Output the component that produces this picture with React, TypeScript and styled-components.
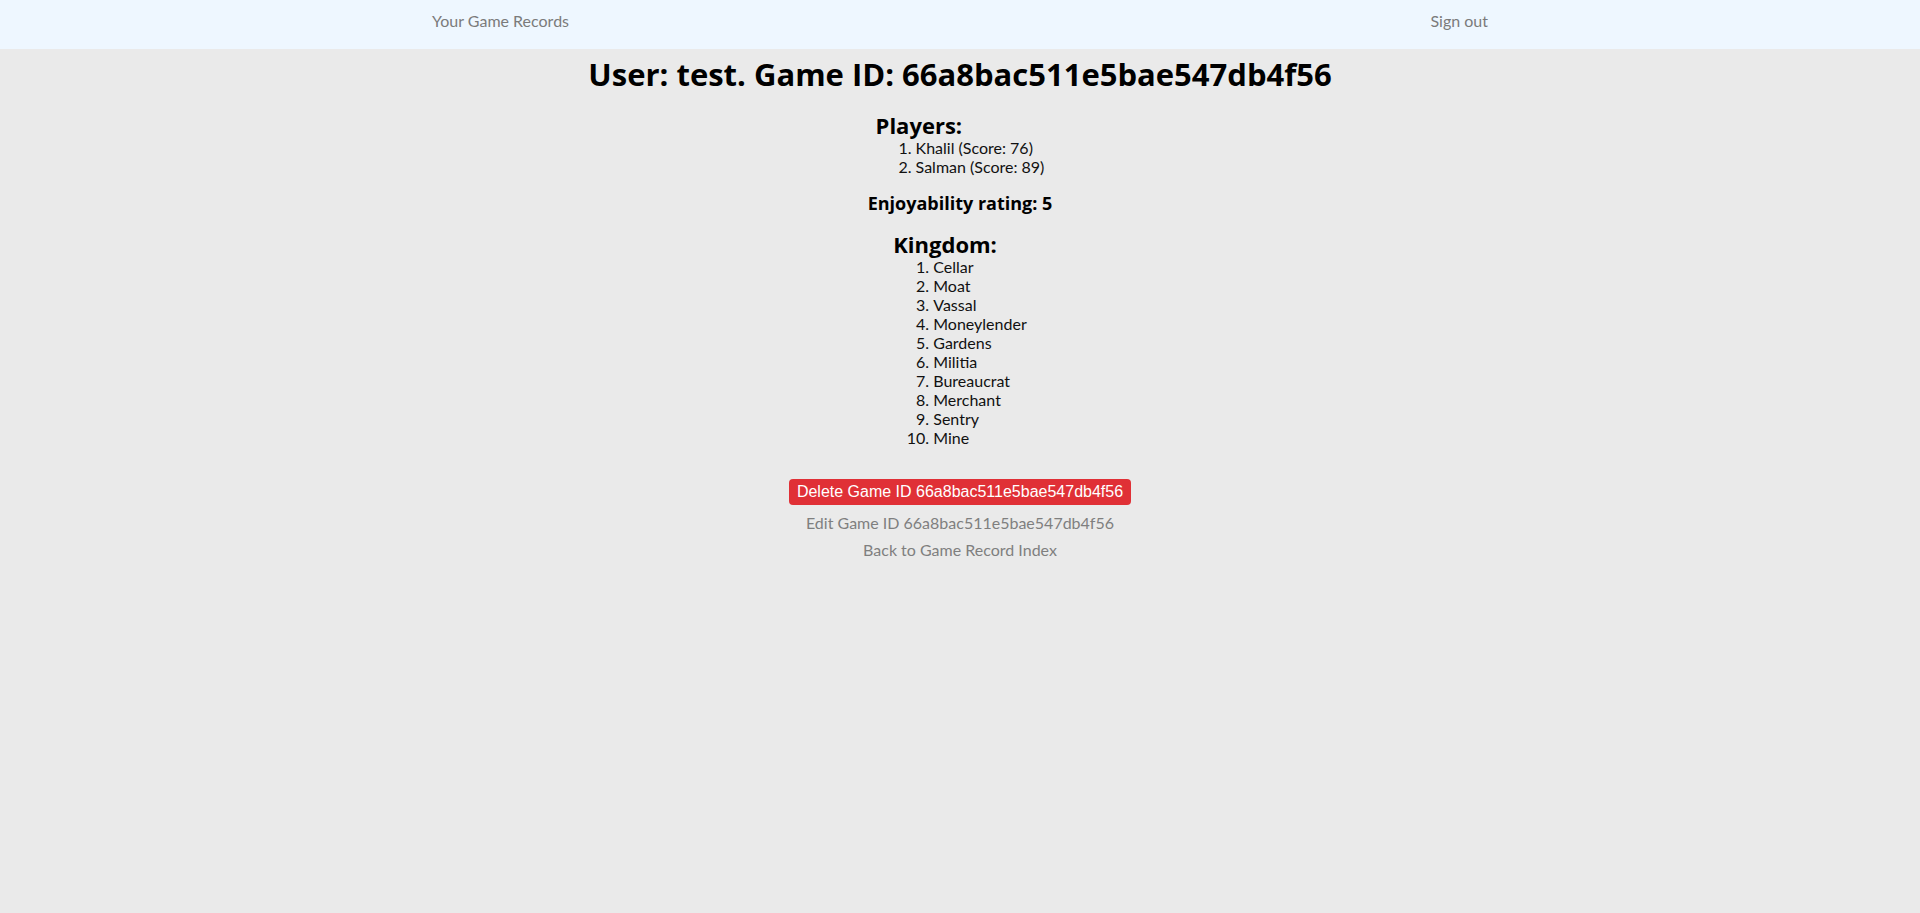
import React from "react";
import styled, { createGlobalStyle } from "styled-components";

const GlobalStyle = createGlobalStyle`
  html, body {
    margin: 0;
    padding: 0;
  }
  body {
    background: #eaeaea;
    font-family: Lato, "Open Sans", sans-serif;
    font-size: 16px;
    color: #111;
  }
`;

const NavBar = styled.nav`
  height: 49px;
  background: #eef7ff;
  box-sizing: border-box;
`;

const NavInner = styled.div`
  width: 1056px;
  margin: 0 auto;
  padding-top: 11px;
  display: flex;
  justify-content: space-between;
`;

const NavLink = styled.a`
  color: #7b7b7b;
  font-size: 16px;
  line-height: 19px;
  text-decoration: none;
`;

const Main = styled.main`
  text-align: center;
  padding-top: 7px;
`;

const Title = styled.h1`
  margin: 0;
  font-family: "Open Sans", sans-serif;
  font-weight: 700;
  font-size: 31px;
  line-height: 36px;
  color: #000;
`;

const Block = styled.section<{ $top: number }>`
  display: inline-block;
  text-align: left;
  margin-top: ${(p) => p.$top}px;
`;

const SectionHeading = styled.h2`
  margin: 0;
  font-family: "Open Sans", sans-serif;
  font-weight: 700;
  font-size: 22px;
  line-height: 26px;
  color: #000;
`;

const List = styled.ol`
  margin: 0;
  padding-left: 40px;
  line-height: 19px;
  font-size: 16px;
`;

const Rating = styled.h3`
  margin: 16px 0 0;
  font-family: "Open Sans", sans-serif;
  font-weight: 700;
  font-size: 18px;
  line-height: 22px;
  color: #000;
`;

const Actions = styled.div`
  margin-top: 32px;
  display: flex;
  flex-direction: column;
  align-items: center;
  gap: 8px;
`;

const DangerButton = styled.button`
  border: none;
  border-radius: 4px;
  background: #e03036;
  color: #fff;
  font-family: "Liberation Sans", Arial, sans-serif;
  font-size: 16px;
  line-height: 26px;
  height: 26px;
  padding: 0 8px;
  cursor: pointer;
`;

const GrayLink = styled.a`
  color: #7f7f7f;
  font-size: 16px;
  line-height: 19px;
  text-decoration: none;
`;

const gameId = "66a8bac511e5bae547db4f56";
const players = [
  { name: "Khalil", score: 76 },
  { name: "Salman", score: 89 },
];
const kingdom = [
  "Cellar",
  "Moat",
  "Vassal",
  "Moneylender",
  "Gardens",
  "Militia",
  "Bureaucrat",
  "Merchant",
  "Sentry",
  "Mine",
];

export default function App() {
  return (
    <>
      <GlobalStyle />
      <NavBar>
        <NavInner>
          <NavLink href="#">Your Game Records</NavLink>
          <NavLink href="#">Sign out</NavLink>
        </NavInner>
      </NavBar>
      <Main>
        <Title>User: test. Game ID: {gameId}</Title>
        <div>
          <Block $top={20}>
            <SectionHeading>Players:</SectionHeading>
            <List>
              {players.map((p) => (
                <li key={p.name}>
                  {p.name} (Score: {p.score})
                </li>
              ))}
            </List>
          </Block>
        </div>
        <Rating>Enjoyability rating: 5</Rating>
        <div>
          <Block $top={17}>
            <SectionHeading>Kingdom:</SectionHeading>
            <List>
              {kingdom.map((k) => (
                <li key={k}>{k}</li>
              ))}
            </List>
          </Block>
        </div>
        <Actions>
          <DangerButton>Delete Game ID {gameId}</DangerButton>
          <GrayLink href="#">Edit Game ID {gameId}</GrayLink>
          <GrayLink href="#">Back to Game Record Index</GrayLink>
        </Actions>
      </Main>
    </>
  );
}
